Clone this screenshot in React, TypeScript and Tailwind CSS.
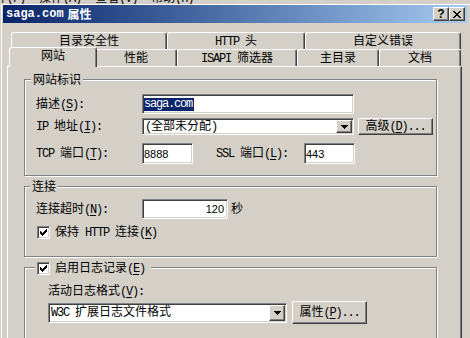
import React from 'react';

const SUNKEN =
  "bg-white border border-t-[#808080] border-l-[#808080] border-r-white border-b-white shadow-[inset_1px_1px_0_#404040,inset_-1px_-1px_0_#d4d0c8]";
const RAISED =
  "bg-[#d4d0c8] border border-t-white border-l-white border-r-[#404040] border-b-[#404040] shadow-[inset_-1px_-1px_0_#808080]";
const MONO = "font-['Liberation_Mono',monospace] tracking-[-1.2px]";
const TAB =
  "bg-[#d4d0c8] border-t border-l border-r border-t-white border-l-white border-r-[#404040] shadow-[inset_-1px_0_0_#808080] rounded-t-[3px] whitespace-nowrap";

function L({ children }: { children: React.ReactNode }) {
  return <span className={MONO}>{children}</span>;
}

function Acc({ k, colon = false }: { k: string; colon?: boolean }) {
  return (
    <L>
      (<u className="underline-offset-2">{k}</u>){colon ? ':' : ''}
    </L>
  );
}

function Arrow() {
  return (
    <svg width="7" height="4" viewBox="0 0 7 4" shapeRendering="crispEdges">
      <path d="M0 0h7v1H0zM1 1h5v1H1zM2 2h3v1H2zM3 3h1v1H3z" fill="#000" />
    </svg>
  );
}

function CheckMark() {
  return (
    <svg width="7" height="7" viewBox="0 0 7 7" shapeRendering="crispEdges">
      <path
        d="M6 0h1v1H6zM5 1h2v1H5zM0 2h1v1H0zM4 2h3v1H4zM0 3h2v1H0zM3 3h3v1H3zM0 4h5v1H0zM1 5h3v1H1zM2 6h1v1H2z"
        fill="#000"
      />
    </svg>
  );
}

function Checkbox() {
  return (
    <div className={SUNKEN + ' w-[13px] h-[13px] shrink-0 flex items-center justify-center'}>
      <CheckMark />
    </div>
  );
}

function Combo({ className, children }: { className: string; children: React.ReactNode }) {
  return (
    <div className={SUNKEN + ' flex p-px ' + className}>
      <div className="flex-1 flex items-center pl-px whitespace-pre overflow-hidden">
        <span>{children}</span>
      </div>
      <div className={RAISED + ' w-[16px] flex items-center justify-center'}>
        <Arrow />
      </div>
    </div>
  );
}

function Tab({ className, children }: { className: string; children: React.ReactNode }) {
  return (
    <div className={TAB + ' h-full flex items-center justify-center ' + className}>
      <span className="whitespace-pre">{children}</span>
    </div>
  );
}

export default function App() {
  return (
    <div className="w-[470px] h-[338px] overflow-hidden bg-[#d4d0c8] text-black text-[12px] leading-[14px] font-['Liberation_Sans','Noto_Sans_CJK_SC',sans-serif]">
      {/* menu strip (cut off by the dialog) */}
      <div className="h-[4px] overflow-hidden">
        <div className="flex -mt-[9px] -ml-[17px] gap-[14px] whitespace-nowrap">
          <span>
            文件<Acc k="F" />
          </span>
          <span>
            操作<Acc k="A" />
          </span>
          <span>
            查看<Acc k="V" />
          </span>
          <span>
            帮助<Acc k="H" />
          </span>
        </div>
      </div>

      {/* window */}
      <div className="ml-px border-l border-t border-white pl-px">
        {/* title bar */}
        <div className="w-[464px] h-[18px] flex items-center pl-[3px] bg-linear-to-r from-[#0a246a] to-[#a6caf0]">
          <span className="text-white font-bold font-['Liberation_Mono',monospace] text-[12px]">saga.com</span>
          <span className="text-white font-bold ml-[4px] font-['Noto_Sans_CJK_SC',sans-serif]">属性</span>
          <div className="ml-auto mr-[2px] flex">
            <div className={RAISED + ' w-[16px] h-[14px] flex items-center justify-center'}>
              <span className="font-bold text-[12px] leading-[12px] font-['Liberation_Sans',sans-serif] -mt-px">?</span>
            </div>
            <div className={RAISED + ' w-[16px] h-[14px] flex items-center justify-center'}>
              <svg width="8" height="7" viewBox="0 0 8 7" shapeRendering="crispEdges">
                <path
                  d="M0 0h2v1H0zM6 0h2v1H6zM1 1h2v1H1zM5 1h2v1H5zM2 2h4v1H2zM3 3h2v1H3zM2 4h4v1H2zM1 5h2v1H1zM5 5h2v1H5zM0 6h2v1H0zM6 6h2v1H6z"
                  fill="#000"
                />
              </svg>
            </div>
          </div>
        </div>

        {/* body */}
        <div className="pt-[9px] pl-[4px]">
          <div className="w-[455px]">
            {/* tab row 1 */}
            <div className="flex h-[17px] pl-[4px]">
              <Tab className="w-[156px]">目录安全性</Tab>
              <Tab className="w-[138px]">
                <L>HTTP </L>头
              </Tab>
              <Tab className="w-[156px]">自定义错误</Tab>
            </div>
            {/* tab row 2 */}
            <div className="flex items-start h-[17px] pl-[4px]">
              <div className={TAB + ' relative z-10 -ml-[2px] -mr-[2px] -mt-[2px] w-[88px] h-[20px] flex justify-center pt-[1px]'}>
                网站
              </div>
              <Tab className="w-[82px]">性能</Tab>
              <Tab className="w-[120px]">
                <L>ISAPI </L>筛选器
              </Tab>
              <Tab className="w-[82px]">主目录</Tab>
              <Tab className="w-[82px]">文档</Tab>
            </div>

            {/* panel */}
            <div className="h-[290px] border-l border-t border-r border-l-white border-t-white border-r-[#404040] shadow-[inset_-1px_0_0_#808080] pl-[16px] pt-[12px]">
              {/* group 1 */}
              <div className="relative w-[413px] h-[97px] border border-[#808080] shadow-[inset_1px_1px_0_#fff,1px_1px_0_#fff] pl-[11px] pt-[14px]">
                <div className="absolute left-[6px] -top-[7px] h-[14px] px-[2px] bg-[#d4d0c8]">网站标识</div>
                <div className="flex items-center h-[20px]">
                  <div className="w-[106px]">
                    描述<Acc k="S" colon />
                  </div>
                  <div className={SUNKEN + ' w-[212px] h-[20px] flex items-center'}>
                    <span className="ml-px bg-[#0a246a] text-white leading-[13px] font-['Liberation_Mono',monospace] tracking-[-1.2px] pr-[2px]">
                      saga.com
                    </span>
                  </div>
                </div>
                <div className="flex items-center h-[17px] mt-[4px]">
                  <div className="w-[106px]">
                    <L>IP </L>地址<Acc k="I" colon />
                  </div>
                  <Combo className="w-[212px] h-[17px]">
                    <L>(</L>全部未分配<L>)</L>
                  </Combo>
                  <div className={RAISED + ' ml-[4px] w-[75px] h-[17px] flex items-center justify-center'}>
                    <span>
                      高级<Acc k="D" />
                      <L>...</L>
                    </span>
                  </div>
                </div>
                <div className="flex items-center h-[21px] mt-[8px]">
                  <div className="w-[106px]">
                    <L>TCP </L>端口<Acc k="T" colon />
                  </div>
                  <div className={SUNKEN + ' w-[51px] h-[21px] flex items-center pl-[1px] text-[11px]'}>8888</div>
                  <div className="ml-[23px] w-[88px]">
                    <L>SSL </L>端口<Acc k="L" colon />
                  </div>
                  <div className={SUNKEN + ' w-[51px] h-[21px] flex items-center pl-[1px] text-[11px]'}>443</div>
                </div>
              </div>

              {/* group 2 */}
              <div className="relative mt-[10px] w-[413px] h-[71px] border border-[#808080] shadow-[inset_1px_1px_0_#fff,1px_1px_0_#fff] pl-[11px] pt-[12px]">
                <div className="absolute left-[5px] -top-[7px] h-[14px] px-[2px] bg-[#d4d0c8]">连接</div>
                <div className="flex items-center h-[20px]">
                  <div className="w-[106px]">
                    连接超时<Acc k="N" colon />
                  </div>
                  <div className={SUNKEN + ' w-[86px] h-[20px] flex items-center justify-end pr-[3px] text-[11px]'}>120</div>
                  <div className="ml-[3px]">秒</div>
                </div>
                <div className="flex items-center h-[13px] mt-[7px] pl-px">
                  <Checkbox />
                  <div className="ml-[5px]">
                    保持<L> HTTP </L>连接<Acc k="K" />
                  </div>
                </div>
              </div>

              {/* group 3 */}
              <div className="relative mt-[10px] w-[413px] h-[120px] border border-[#808080] shadow-[inset_1px_1px_0_#fff,1px_1px_0_#fff] pl-[23px] pt-[16px]">
                <div className="absolute left-[10px] -top-[6px] h-[13px] px-[2px] bg-[#d4d0c8] flex items-center">
                  <Checkbox />
                  <div className="ml-[5px] pr-[4px] whitespace-nowrap">
                    启用日志记录<Acc k="E" />
                  </div>
                </div>
                <div className="h-[14px]">
                  活动日志格式<Acc k="V" colon />
                </div>
                <div className="flex items-center h-[23px] mt-[3px]">
                  <Combo className="w-[239px] h-[20px]">
                    <L>W3C </L>扩展日志文件格式
                  </Combo>
                  <div className={RAISED + ' ml-[5px] w-[75px] h-[23px] flex items-center justify-center'}>
                    <span>
                      属性<Acc k="P" />
                      <L>...</L>
                    </span>
                  </div>
                </div>
              </div>
            </div>
          </div>
        </div>
      </div>
    </div>
  );
}
